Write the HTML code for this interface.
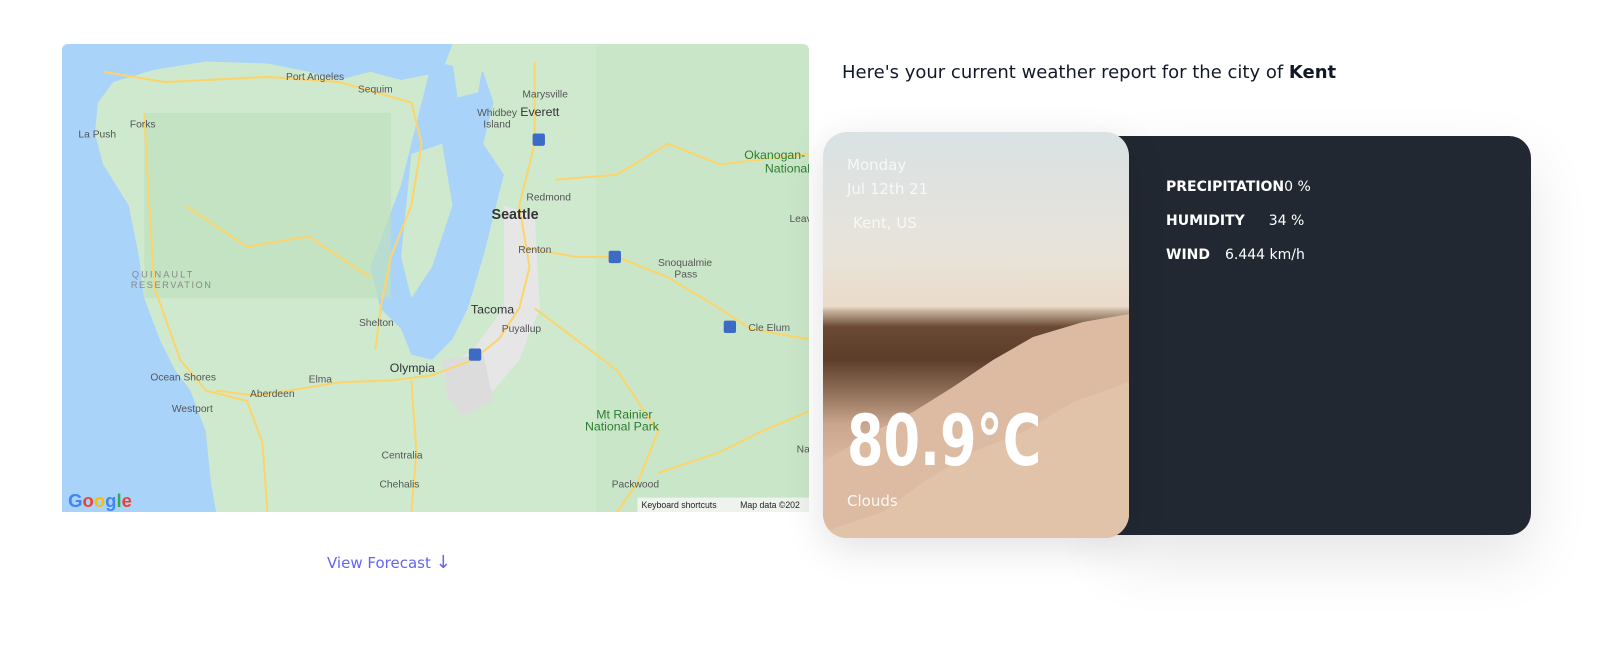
<!DOCTYPE html>
<html><head><meta charset="utf-8"><style>
*{margin:0;padding:0;box-sizing:border-box}
body{width:1613px;height:653px;background:#fff;font-family:"DejaVu Sans","Liberation Sans",sans-serif;position:relative;overflow:hidden}
#map{position:absolute;left:62px;top:44px;width:747px;height:468px;border-radius:6px 6px 0 0;overflow:hidden}
#map svg{display:block}
.h{position:absolute;left:842px;top:62px;font-size:18px;color:#111827}
.card{position:absolute;left:823px;top:132px;width:708px;height:406px}
.dark{position:absolute;left:290px;top:4px;width:418px;height:399px;background:#222831;border-radius:0 22px 22px 0;box-shadow:0 25px 60px rgba(0,0,0,.10)}
.img{position:absolute;left:0;top:0;width:306px;height:406px;border-radius:24px;overflow:hidden;box-shadow:0 10px 40px rgba(0,0,0,.12);
background:linear-gradient(180deg,#d9e2e4 0%,#e8e3da 30%,#eadbc9 43%,#c9b5a0 44%,#6a4a34 48%,#5b3d2a 56%,#8f6f58 64%,#c9a68d 72%,#dcb9a0 82%,#c99f85 100%)}
.img .sand{position:absolute;left:0;top:0;width:306px;height:406px}
.w{position:absolute;color:rgba(255,255,255,.75);font-size:15px}
.stat{position:absolute;left:1166px;color:#fff;font-size:14px}
.stat b{font-weight:bold}
.vf{position:absolute;left:327px;top:552px;color:#6366f1;font-size:15px}
</style></head><body>
<div id="map">
<svg width="747" height="468" viewBox="60 43 727 455" preserveAspectRatio="none">
<rect x="60" y="43" width="727" height="455" fill="#cfe9cf"/>
<path d="M60 43 H440 L430 70 390 78 360 70 330 78 300 70 260 62 200 60 150 68 110 80 95 100 92 130 100 160 125 200 135 250 140 290 155 330 170 360 185 380 200 420 205 470 210 498 H60Z" fill="#aad3fa"/>
<path d="M420 60 L470 70 480 100 470 140 490 170 480 210 470 250 455 300 440 330 420 350 400 345 390 320 370 300 360 260 375 220 390 180 400 140 410 100Z" fill="#aad3fa"/>
<path d="M440 60 L470 60 465 90 445 95Z" fill="#cfe9cf"/>
<path d="M400 150 L430 140 440 200 420 260 400 290 390 250 395 200Z" fill="#cfe9cf"/>
<path d="M490 200 L520 210 525 300 505 350 480 380 440 390 430 360 460 340 490 300Z" fill="#e6e6e6"/>
<path d="M430 350 L470 345 480 390 450 405 435 385Z" fill="#dcdcdc"/>
<rect x="580" y="43" width="207" height="455" fill="#c6e4c4" opacity=".6"/>
<rect x="140" y="110" width="240" height="180" fill="#bfe0bd" opacity=".7"/>
<g fill="none" stroke="#fbd56b" stroke-width="2">
<path d="M520 60 V140 L505 200 L515 260 L505 300 L485 330 L460 350 L420 365 L380 370 L330 372 L250 385 L210 380"/>
<path d="M505 240 L560 250 L600 250 L650 270 L700 300 L730 320 L787 330"/>
<path d="M100 70 L160 80 L260 75 L330 80 L400 100 L410 140 L400 200 L380 250 L370 300 L365 340"/>
<path d="M140 110 L145 200 L150 280 L175 350 L200 380 L240 390 L255 430 L260 498"/>
<path d="M540 175 L600 170 L650 140 L700 160 L787 150"/>
<path d="M400 370 L405 440 L400 498"/>
<path d="M520 300 L560 330 L600 360 L640 420 L620 470 L600 498"/>
<path d="M640 460 L700 440 L740 420 L787 400"/>
<path d="M180 200 L240 240 L300 230 L360 270"/>
</g>
<g font-family="Liberation Sans,Arial,sans-serif" font-size="10" fill="#555">
<text x="278" y="78">Port Angeles</text><text x="348" y="90">Sequim</text>
<text x="508" y="95">Marysville</text><text x="464" y="113">Whidbey</text><text x="470" y="124">Island</text>
<text x="76" y="134">La Push</text><text x="126" y="124">Forks</text>
<text x="512" y="195">Redmond</text><text x="504" y="246">Renton</text>
<text x="640" y="259">Snoqualmie</text><text x="656" y="270">Pass</text>
<text x="349" y="317">Shelton</text><text x="488" y="323">Puyallup</text>
<text x="728" y="322">Cle Elum</text><text x="146" y="370">Ocean Shores</text>
<text x="300" y="372">Elma</text><text x="243" y="386">Aberdeen</text><text x="167" y="401">Westport</text>
<text x="371" y="446">Centralia</text><text x="369" y="474">Chehalis</text><text x="595" y="474">Packwood</text>
<text x="768" y="216">Leav</text><text x="775" y="440">Na</text>
<text x="128" y="270" letter-spacing="2" fill="#888" font-size="9">QUINAULT</text>
<text x="127" y="280" letter-spacing="1.5" fill="#888" font-size="9">RESERVATION</text>
</g>
<g font-family="Liberation Sans,Arial,sans-serif" fill="#333" font-size="12">
<text x="506" y="113">Everett</text><text x="478" y="213" font-size="14" font-weight="bold">Seattle</text>
<text x="458" y="305">Tacoma</text><text x="379" y="362">Olympia</text>
</g>
<g font-family="Liberation Sans,Arial,sans-serif" fill="#2e7d32" font-size="12">
<text x="724" y="155">Okanogan-</text><text x="744" y="168">National</text>
<text x="580" y="407">Mt Rainier</text><text x="569" y="419">National Park</text>
</g>
<g fill="#3b6bc4"><rect x="518" y="130" width="12" height="12" rx="2"/><rect x="592" y="244" width="12" height="12" rx="2"/><rect x="456" y="339" width="12" height="12" rx="2"/><rect x="704" y="312" width="12" height="12" rx="2"/></g>
<g font-family="Liberation Sans,Arial,sans-serif" font-size="18" font-weight="bold"><text x="66" y="493" fill="#4285f4">G<tspan fill="#ea4335">o</tspan><tspan fill="#fbbc05">o</tspan><tspan fill="#4285f4">g</tspan><tspan fill="#34a853">l</tspan><tspan fill="#ea4335">e</tspan></text></g>
<rect x="620" y="484" width="167" height="14" fill="#f5f5f5" opacity=".85"/>
<text x="624" y="494" font-family="Liberation Sans,Arial,sans-serif" font-size="8.5" fill="#222">Keyboard shortcuts</text>
<text x="720" y="494" font-family="Liberation Sans,Arial,sans-serif" font-size="8.5" fill="#222">Map data ©202</text>
</svg>
</div>
<div class="h">Here's your current weather report for the city of <b>Kent</b></div>
<div class="card">
<div class="dark"></div>
<div class="img">
<svg class="sand" viewBox="0 0 306 406"><path d="M306 182 L260 190 210 205 170 228 130 255 90 280 50 300 0 330 V406 H306Z" fill="#dcbba2"/><path d="M306 250 L250 270 200 300 150 320 100 350 60 380 0 400 V406 H306Z" fill="#e3c6ad" opacity=".7"/></svg>
</div>
<div class="w" style="left:24px;top:24px">Monday</div>
<div class="w" style="left:24px;top:48px">Jul 12th 21</div>
<div class="w" style="left:30px;top:82px">Kent, US</div>
<div class="w" style="left:24px;top:274px;font-size:70px;line-height:1;font-weight:bold;color:#fff;transform:scaleX(.75);transform-origin:left top;white-space:nowrap">80.9°C</div>
<div class="w" style="left:24px;top:360px;color:rgba(255,255,255,.9)">Clouds</div>
</div>
<div class="stat" style="top:179px"><b>PRECIPITATION</b>0 %</div>
<div class="stat" style="top:213px"><b>HUMIDITY</b><span style="margin-left:24px">34 %</span></div>
<div class="stat" style="top:247px"><b>WIND</b><span style="margin-left:15px">6.444 km/h</span></div>
<div class="vf">View Forecast <span style="font-size:18px">↓</span></div>
</body></html>
